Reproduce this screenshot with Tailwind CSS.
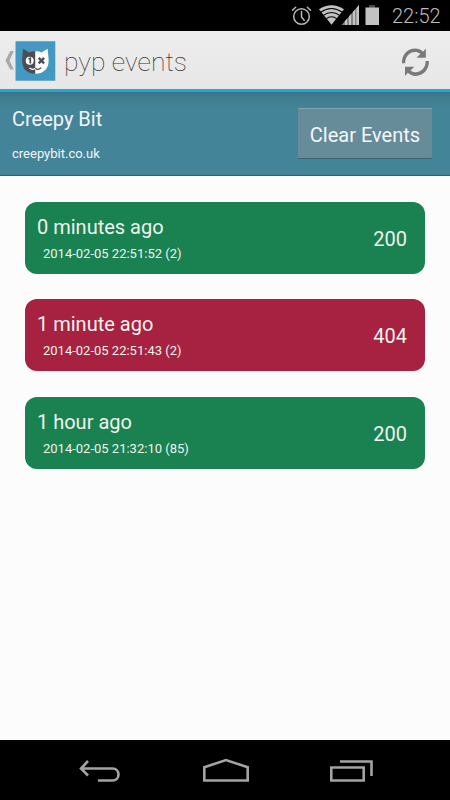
<!DOCTYPE html>
<html lang="en">
<head>
<meta charset="utf-8">
<title>pyp events</title>
<script src="https://cdn.jsdelivr.net/npm/@tailwindcss/browser@4"></script>
</head>
<body class="w-[450px] h-[800px] overflow-hidden flex flex-col bg-[#fcfcfc] font-['Roboto',sans-serif]">
  <!-- Status bar -->
  <div class="h-[31px] shrink-0 bg-black flex items-center justify-end pr-[8px]">
    <svg class="w-[96px] h-[31px] shrink-0" viewBox="0 0 96 31">
      <g fill="none" stroke="#b8b8b8" stroke-width="1.5" stroke-linecap="round">
        <circle cx="12.5" cy="16.5" r="7.8"/>
        <path d="M12.5 11.5v5.5l2.7 3.3M3.5 10.2l3.2-2.9M21.500 10.200l-3.200-2.900"/>
      </g>
      <path d="M42.500 24.700L30 9.200Q42.500 1.200 55 9.200Z" fill="#c2c2c2"/>
      <g fill="none" stroke="#000" stroke-width="1.100">
        <path d="M31.500 12.300Q42.500 4.800 53.500 12.300M34 15.600Q42.500 9.300 51 15.600M37 18.900Q42.500 14.700 48 18.900"/>
      </g>
      <path d="M52.500 25L70 5V25Z" fill="#858585"/>
      <path d="M56 25v-4l2-2.300V25zM60 25v-8.600l2-2.300V25zM64 25v-13.200l2-2.200V25zM67.500 25V7.900L70 5V25z" fill="#c4c4c4"/>
      <path d="M80 5h6v3h-6z" fill="#4a4a4a"/>
      <path d="M76.500 7.500H90V25H76.500z" fill="#c2c2c2"/>
    </svg>
    <span class="w-[50px] ml-[7px] text-[20px] leading-[31px] text-[#bcbcbc] font-light whitespace-nowrap relative top-[1px]">22:52</span>
  </div>

  <!-- Action bar -->
  <div class="h-[61px] shrink-0 bg-gradient-to-b from-[#ededed] to-[#e7e7e7] border-b-[3px] border-[#1fa9dc] flex items-center pl-[5px] pr-[20px]">
    <svg class="w-[10px] h-[20px] shrink-0" viewBox="0 0 10 20"><path d="M5.200 1H8.800L4.500 10.500L8.800 19.500H5.200L.5 10.500Z" fill="#a9a9a9"/></svg>
    <svg class="w-[41px] h-[40px] shrink-0 mt-[2px]" viewBox="0 0 41 40">
      <path d="M.5 .3H40.300V39.700H.5z" fill="#4499c2"/>
      <path d="M20.300 10.300C18 10.200 16 10.600 14.300 11.400L8 7.700Q7.700 13 7.200 18C6.500 27 11 32.500 20.300 32.800Z" fill="#4b4e52"/>
      <path d="M20.300 10.300C22.500 10.200 24.700 10.600 26.500 11.400L32.700 7.700Q33 13 33.600 18C34.200 27 29.500 32.500 20.300 32.800Z" fill="#fff"/>
      <ellipse cx="14.700" cy="19.800" rx="4" ry="4" fill="#fff"/>
      <path d="M13.500 18l1.800-.7V22.500" stroke="#4b4e52" stroke-width="1.700" fill="none"/>
      <path d="M23.700 16.900l5.400 5.400M29.100 16.900l-5.400 5.400" stroke="#4b4e52" stroke-width="2.400"/>
      <path d="M14.500 27Q17.500 29.500 20.300 27.200" fill="none" stroke="#fff" stroke-width="1.200"/>
      <path d="M20.300 27.200Q23 29.500 26.200 26.800" fill="none" stroke="#4b4e52" stroke-width="1.200"/>
    </svg>
    <h1 class="ml-[8px] mt-[4px] text-[26.500px] leading-[40px] font-thin text-[#333] whitespace-nowrap tracking-[0px]">pyp events</h1>
    <svg class="ml-auto w-[29px] h-[30px] shrink-0 mt-[3px]" viewBox="0 0 29 30" fill="#797979">
      <path d="M.9 16.300C.5 7.500 7 1.500 14 1.500C17.200 1.500 20 2.700 22 4.700L24.800 1.500V10.700H15.500L19.300 7C17.800 5.700 16 5.100 14 5.100C8.300 5.100 4 10 4.200 16.300Z"/>
      <path d="M.9 16.300C.5 7.500 7 1.500 14 1.500C17.200 1.500 20 2.700 22 4.700L24.800 1.500V10.700H15.500L19.300 7C17.800 5.700 16 5.100 14 5.100C8.300 5.100 4 10 4.200 16.300Z" transform="rotate(180 14.400 15.200)"/>
    </svg>
  </div>

  <!-- Site header -->
  <div class="h-[84px] shrink-0 bg-[linear-gradient(to_bottom,#3d7485_0px,#407d90_7px,#448499_18px)] border-b border-[#08708a] flex justify-between pl-[12px] pr-[18px]">
    <div class="text-[#f2f6f7]">
      <div class="mt-[14px] text-[20px] leading-[26px] whitespace-nowrap">Creepy Bit</div>
      <div class="mt-[14px] text-[13px] leading-[16px] whitespace-nowrap">creepybit.co.uk</div>
    </div>
    <button class="mt-[16px] w-[134px] h-[51px] rounded-[1px] bg-[#678c99] border-t border-b border-t-[#86a5ae] border-b-[#3e6270] text-[20px] text-[#f4f7f8] whitespace-nowrap pt-[2px]">Clear Events</button>
  </div>

  <!-- Events -->
  <div class="flex-1 px-[25px] pt-[25.500px] flex flex-col gap-[25.500px] text-[#eef3ef]">
    <div class="h-[72px] rounded-[12px] bg-[#1a8150] flex items-center justify-between pl-[12px] pr-[18px]">
      <div>
        <div class="text-[20px] leading-[26px] whitespace-nowrap">0 minutes ago</div>
        <div class="ml-[6px] mt-[6px] text-[13px] leading-[16px] whitespace-nowrap">2014-02-05 22:51:52 (2)</div>
      </div>
      <div class="text-[20px] leading-[26px] mt-[2px]">200</div>
    </div>
    <div class="h-[72px] rounded-[12px] bg-[#a72140] flex items-center justify-between pl-[12px] pr-[18px]">
      <div>
        <div class="text-[20px] leading-[26px] whitespace-nowrap">1 minute ago</div>
        <div class="ml-[6px] mt-[6px] text-[13px] leading-[16px] whitespace-nowrap">2014-02-05 22:51:43 (2)</div>
      </div>
      <div class="text-[20px] leading-[26px] mt-[2px]">404</div>
    </div>
    <div class="h-[72px] rounded-[12px] bg-[#1a8150] flex items-center justify-between pl-[12px] pr-[18px]">
      <div>
        <div class="text-[20px] leading-[26px] whitespace-nowrap">1 hour ago</div>
        <div class="ml-[6px] mt-[6px] text-[13px] leading-[16px] whitespace-nowrap">2014-02-05 21:32:10 (85)</div>
      </div>
      <div class="text-[20px] leading-[26px] mt-[2px]">200</div>
    </div>
  </div>

  <!-- Navigation bar -->
  <div class="h-[60px] shrink-0 bg-black flex items-center justify-between pl-[79px] pr-[77px]">
    <svg class="w-[42px] h-[26px]" viewBox="0 0 42 26" fill="none" stroke="#a3a3a3" stroke-width="2.600"><path d="M2 11.500H33.500C41.500 11.500 41.500 23.500 33.500 23.500H19M9 4L2 11.500L9 18.500"/></svg>
    <svg class="w-[46px] h-[26px]" viewBox="0 0 46 26" fill="none" stroke="#a3a3a3" stroke-width="2.600"><path d="M1.300 10.300L23 3L44.700 10.300V23.500H1.300Z"/></svg>
    <svg class="w-[43px] h-[26px]" viewBox="0 0 43 26" fill="none" stroke="#a3a3a3" stroke-width="2.600"><path d="M1.300 10.500H33.700V23.500H1.300ZM10 4.500H41.500V19"/></svg>
  </div>
</body>
</html>
